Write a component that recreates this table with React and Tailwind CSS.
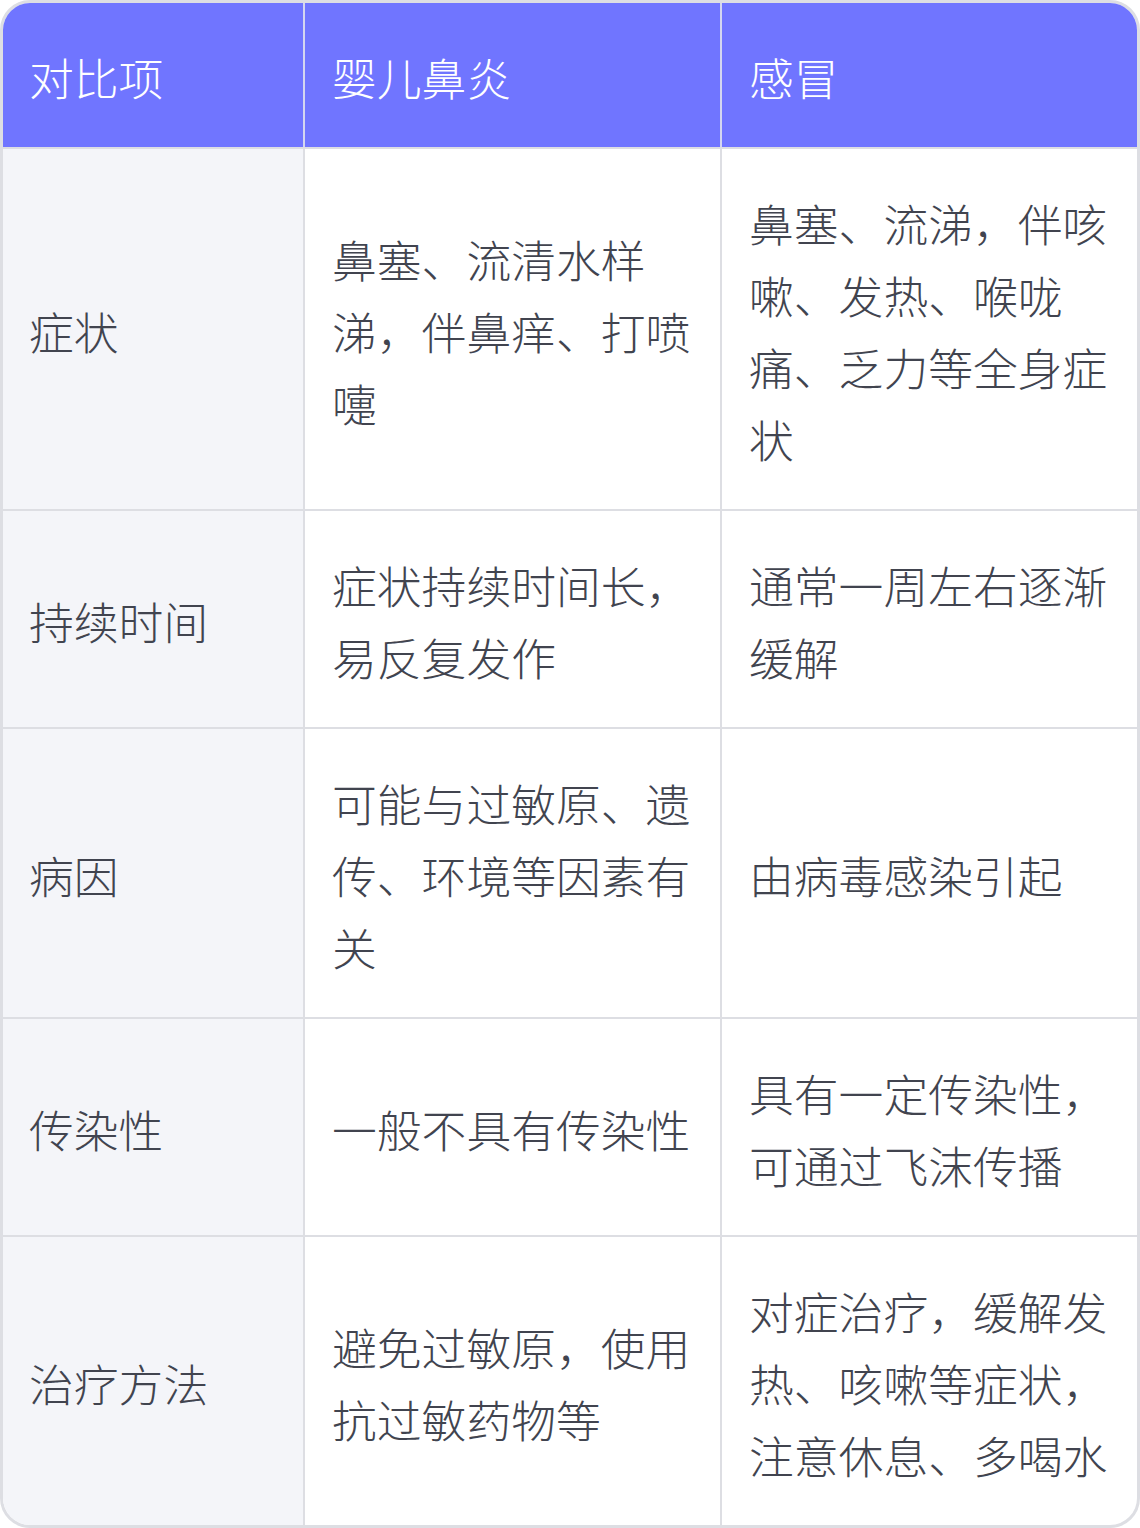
import React from "react";

const rows = [
  ["症状", "鼻塞、流清水样涕，伴鼻痒、打喷嚏", "鼻塞、流涕，伴咳嗽、发热、喉咙痛、乏力等全身症状"],
  ["持续时间", "症状持续时间长，易反复发作", "通常一周左右逐渐缓解"],
  ["病因", "可能与过敏原、遗传、环境等因素有关", "由病毒感染引起"],
  ["传染性", "一般不具有传染性", "具有一定传染性，可通过飞沫传播"],
  ["治疗方法", "避免过敏原，使用抗过敏药物等", "对症治疗，缓解发热、咳嗽等症状，注意休息、多喝水"],
];

export default function App() {
  return (
    <div className="w-[1140px] bg-white font-['Noto_Sans_CJK_SC','Noto_Sans',sans-serif] font-light text-[44.8px] leading-[72px]">
      <div className="overflow-hidden rounded-[30px] border-[3px] border-[#dddee3]">
        <table className="w-full table-fixed border-separate border-spacing-0">
          <colgroup>
            <col className="w-[302px]" />
            <col className="w-[417px]" />
            <col className="w-[415px]" />
          </colgroup>
          <thead>
            <tr className="bg-[#7075ff] text-white">
              <th className="border-r-2 border-[#d4d6f0] pl-[26px] pr-[28px] pt-[38px] pb-[34px] text-left font-light">对比项</th>
              <th className="border-r-2 border-[#d4d6f0] pl-[27px] pr-[26px] pt-[38px] pb-[34px] text-left font-light">婴儿鼻炎</th>
              <th className="pl-[27px] pr-[26px] pt-[38px] pb-[34px] text-left font-light">感冒</th>
            </tr>
          </thead>
          <tbody className="text-[#41444f]">
            {rows.map((r) => (
              <tr key={r[0]}>
                <td className="border-t-2 border-r-2 border-[#dddee3] bg-[#f4f5f9] pl-[26px] pr-[28px] pt-[38px] pb-[34px] align-middle">{r[0]}</td>
                <td className="border-t-2 border-r-2 border-[#dddee3] pl-[27px] pr-[26px] pt-[38px] pb-[34px] align-middle">{r[1]}</td>
                <td className="border-t-2 border-[#dddee3] pl-[27px] pr-[26px] pt-[38px] pb-[34px] align-middle">{r[2]}</td>
              </tr>
            ))}
          </tbody>
        </table>
      </div>
    </div>
  );
}
